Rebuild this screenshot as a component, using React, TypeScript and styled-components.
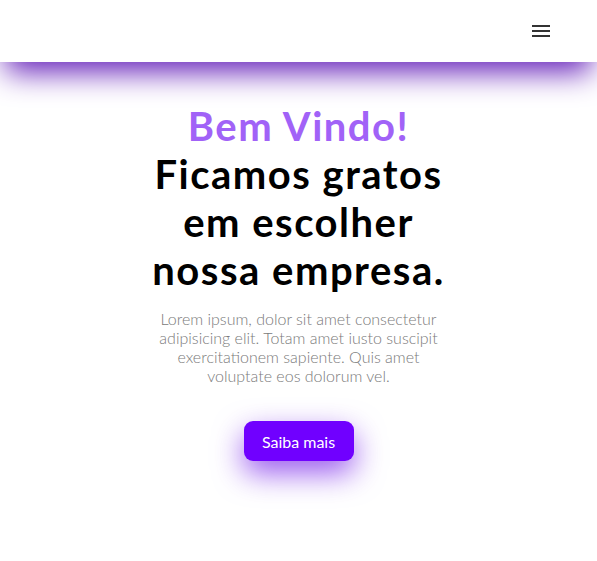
import React from "react";
import styled, { createGlobalStyle } from "styled-components";

const Global = createGlobalStyle`
  html, body { margin: 0; padding: 0; background: #fff; }
  body { font-family: Lato, "Open Sans", sans-serif; }
  * { box-sizing: border-box; }
`;

const Header = styled.header`
  height: 62px;
  background: #fff;
  display: flex;
  align-items: center;
  justify-content: flex-end;
  padding: 0 44px;
  box-shadow: 0 16px 30px -6px rgba(100, 30, 185, 1);
  position: relative;
  z-index: 1;
`;

const MenuButton = styled.button`
  border: 0;
  background: transparent;
  padding: 0;
  width: 24px;
  height: 24px;
  display: flex;
  align-items: center;
  justify-content: center;
  cursor: pointer;
  color: #333;
`;

const Hero = styled.main`
  display: flex;
  flex-direction: column;
  align-items: center;
  padding: 40px 0 80px;
  text-align: center;
`;

const Title = styled.h1`
  margin: 0;
  width: 320px;
  font-family: Lato, sans-serif;
  font-weight: 700;
  font-size: 40px;
  line-height: 48px;
  letter-spacing: 1.5px;
  color: #000;
`;

const Accent = styled.span`
  display: block;
  color: #a162f7;
`;

const Lead = styled.p`
  margin: 15px 0 0;
  width: 300px;
  font-weight: 300;
  font-size: 16px;
  line-height: 19px;
  color: #7a7a7a;
`;

const Cta = styled.button`
  margin-top: 36px;
  width: 110px;
  height: 40px;
  border: 0;
  border-radius: 9px;
  background: #7000ff;
  color: #fff;
  font-family: Lato, sans-serif;
  font-size: 16px;
  cursor: pointer;
  box-shadow: 0 12px 30px rgba(100, 0, 230, 0.65);
`;

export default function App() {
  return (
    <>
      <Global />
      <Header>
        <MenuButton aria-label="menu">
          <svg width="24" height="24" viewBox="0 0 24 24">
            <path d="M3 6h18v2H3zM3 11h18v2H3zM3 16h18v2H3z" fill="currentColor" />
          </svg>
        </MenuButton>
      </Header>
      <Hero>
        <Title>
          <Accent>Bem Vindo!</Accent>
          Ficamos gratos em escolher nossa empresa.
        </Title>
        <Lead>
          Lorem ipsum, dolor sit amet consectetur adipisicing elit. Totam amet iusto suscipit
          exercitationem sapiente. Quis amet voluptate eos dolorum vel.
        </Lead>
        <Cta>Saiba mais</Cta>
      </Hero>
    </>
  );
}
